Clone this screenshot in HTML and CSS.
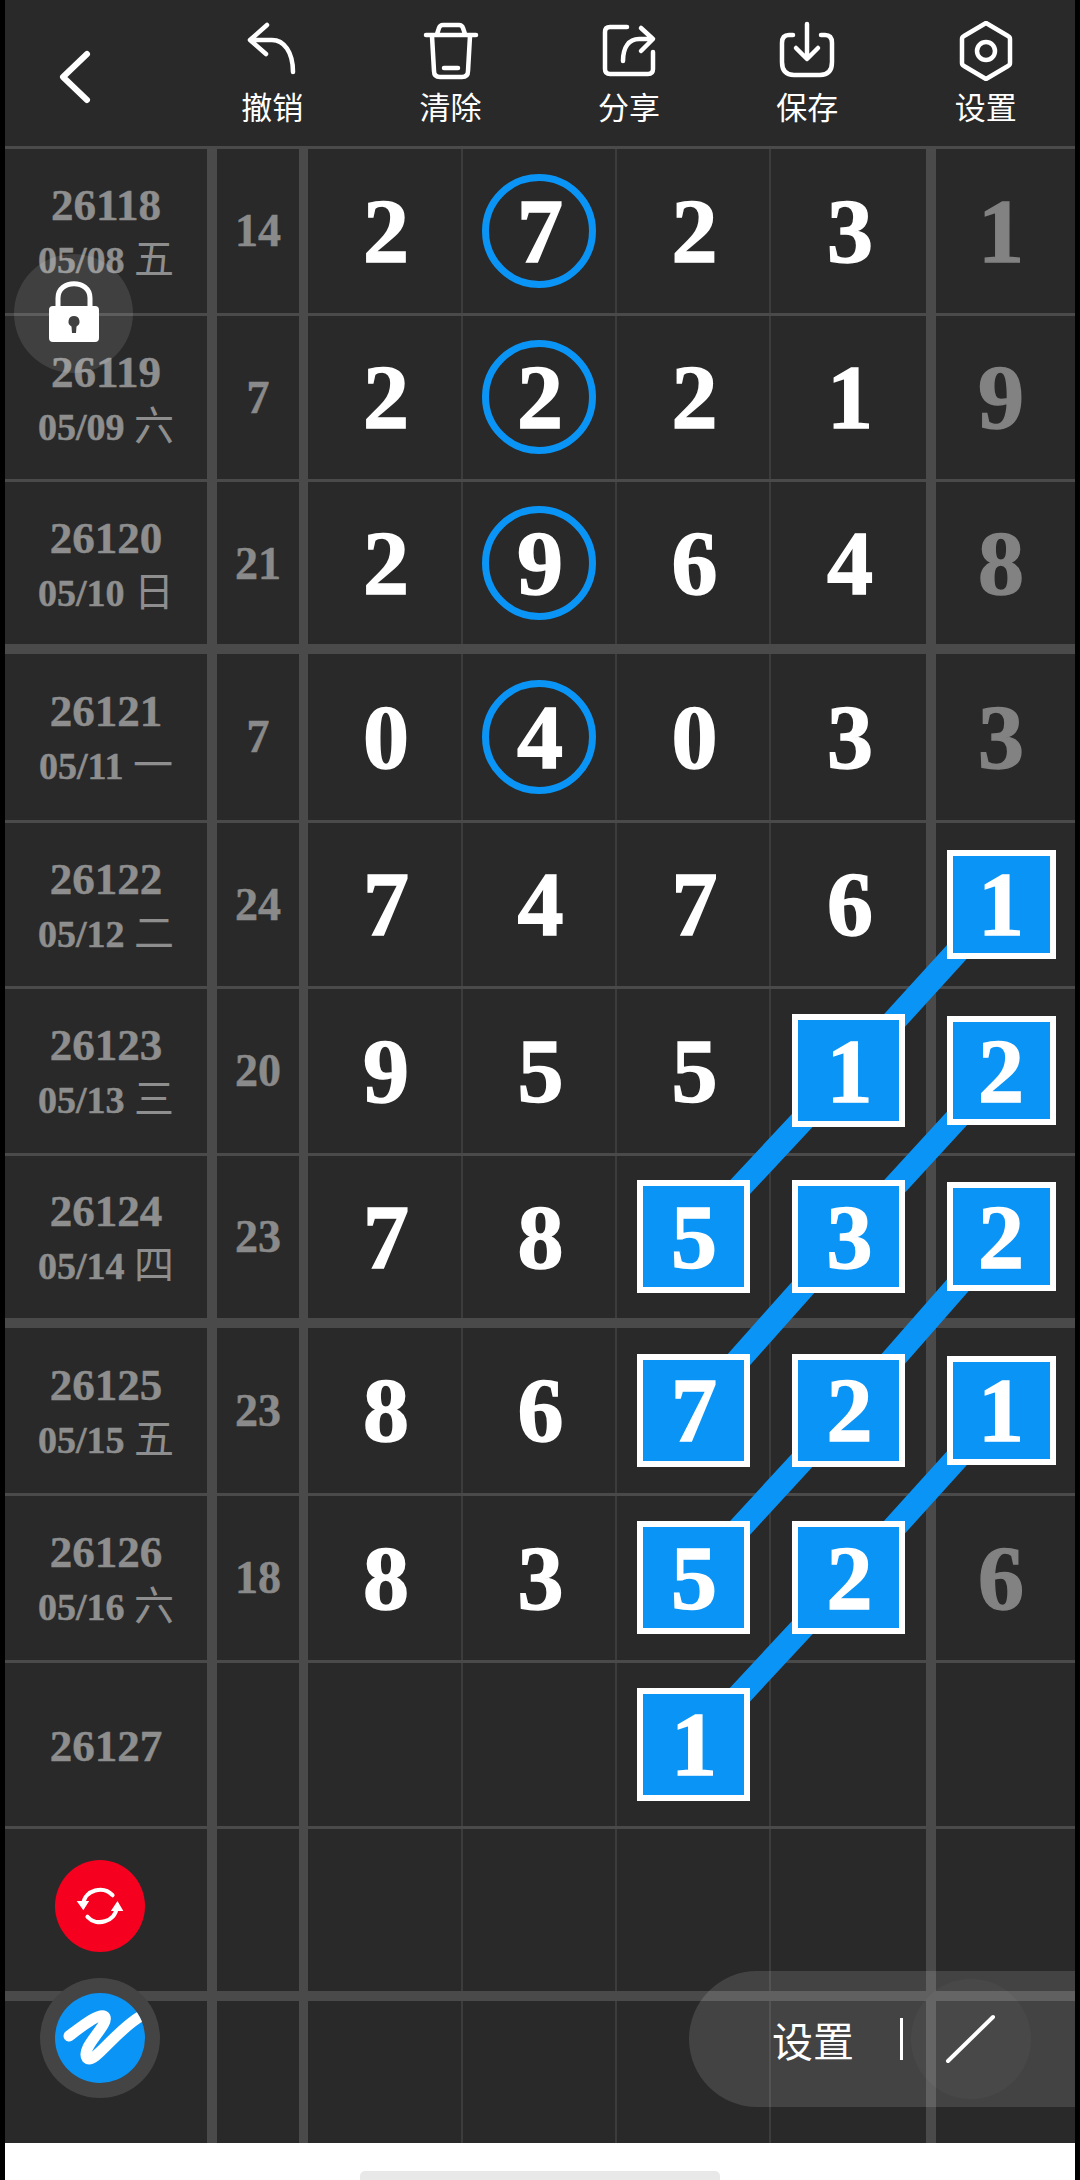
FILE: index.html
```html
<!DOCTYPE html>
<html lang="zh-CN">
<head>
    <meta charset="UTF-8">
    <meta name="viewport" content="width=device-width, initial-scale=1.0">
    <title>走势图</title>
    <link rel="stylesheet" href="styles.css">
</head>
<body>
    <div class="screen">
        <div class="toolbar">
            <div class="back">
                <svg width="40" height="60" viewBox="0 0 40 60"><path d="M30 7 L6 30 L30 53" /></svg>
            </div>
            <div class="tool">
                <svg viewBox="0 0 60 60"><path d="M25 4 L8 19 L24 33 M8 19 H30 C42 19 51 31 51 51" /></svg>
                <span>撤销</span>
            </div>
            <div class="tool">
                <svg viewBox="0 0 60 60"><path d="M5 14 H55 M16 13 L18 7 Q19 4 22 4 H38 Q41 4 42 7 L44 13" /><path d="M11 15 L13 50 Q13 56 19 56 H41 Q47 56 47 50 L49 15 M23 47 H37" /></svg>
                <span>清除</span>
            </div>
            <div class="tool">
                <svg viewBox="0 0 60 60"><path d="M28 6 H11 Q6 6 6 11 V48 Q6 53 11 53 H49 Q54 53 54 48 V31" /><path d="M42 7 L54 18 L42 30 M24 40 C24 26 30 18 40 18 H53" /></svg>
                <span>分享</span>
            </div>
            <div class="tool">
                <svg viewBox="0 0 60 60"><path d="M30 3 V37 M19 27 L30 38 L41 27" /><path d="M16 14 H12 Q5 14 5 22 V41 Q5 54 17 54 H43 Q55 54 55 41 V22 Q55 14 48 14 H44" /></svg>
                <span>保存</span>
            </div>
            <div class="tool">
                <svg viewBox="0 0 60 60"><path d="M30 2 L52 15 Q54 16 54 18 V42 Q54 44 52 45 L30 58 L8 45 Q6 44 6 42 V18 Q6 16 8 15 Z" /><circle cx="30" cy="30" r="9" /></svg>
                <span>设置</span>
            </div>
        </div>

        <div class="grid">
            <svg class="links" width="1070" height="1997">
                <polyline points="995.5,755 843.5,922 689,1087.5" />
                <polyline points="995.5,922 843.5,1087.5 689,1261" />
                <polyline points="995.5,1087.5 843.5,1261 689,1429" />
                <polyline points="995.5,1261 843.5,1429 689,1595" />
            </svg>

            <div class="row">
                <div class="cell date"><b>26118</b><span>05/08 <em>五</em></span></div><div class="cell sum">14</div>
                <div class="cell num">2</div><div class="cell num"><i class="ring">7</i></div><div class="cell num">2</div><div class="cell num">3</div><div class="cell last">1</div>
            </div>
            <div class="row">
                <div class="cell date"><b>26119</b><span>05/09 <em>六</em></span></div><div class="cell sum">7</div>
                <div class="cell num">2</div><div class="cell num"><i class="ring">2</i></div><div class="cell num">2</div><div class="cell num">1</div><div class="cell last">9</div>
            </div>
            <div class="row group-end">
                <div class="cell date"><b>26120</b><span>05/10 <em>日</em></span></div><div class="cell sum">21</div>
                <div class="cell num">2</div><div class="cell num"><i class="ring">9</i></div><div class="cell num">6</div><div class="cell num">4</div><div class="cell last">8</div>
            </div>
            <div class="row group-start">
                <div class="cell date"><b>26121</b><span>05/11 <em>一</em></span></div><div class="cell sum">7</div>
                <div class="cell num">0</div><div class="cell num"><i class="ring">4</i></div><div class="cell num">0</div><div class="cell num">3</div><div class="cell last">3</div>
            </div>
            <div class="row">
                <div class="cell date"><b>26122</b><span>05/12 <em>二</em></span></div><div class="cell sum">24</div>
                <div class="cell num">7</div><div class="cell num">4</div><div class="cell num">7</div><div class="cell num">6</div><div class="cell last"><i class="box narrow">1</i></div>
            </div>
            <div class="row">
                <div class="cell date"><b>26123</b><span>05/13 <em>三</em></span></div><div class="cell sum">20</div>
                <div class="cell num">9</div><div class="cell num">5</div><div class="cell num">5</div><div class="cell num"><i class="box">1</i></div><div class="cell last"><i class="box narrow">2</i></div>
            </div>
            <div class="row group-end">
                <div class="cell date"><b>26124</b><span>05/14 <em>四</em></span></div><div class="cell sum">23</div>
                <div class="cell num">7</div><div class="cell num">8</div><div class="cell num"><i class="box">5</i></div><div class="cell num"><i class="box">3</i></div><div class="cell last"><i class="box narrow">2</i></div>
            </div>
            <div class="row group-start">
                <div class="cell date"><b>26125</b><span>05/15 <em>五</em></span></div><div class="cell sum">23</div>
                <div class="cell num">8</div><div class="cell num">6</div><div class="cell num"><i class="box">7</i></div><div class="cell num"><i class="box">2</i></div><div class="cell last"><i class="box narrow">1</i></div>
            </div>
            <div class="row">
                <div class="cell date"><b>26126</b><span>05/16 <em>六</em></span></div><div class="cell sum">18</div>
                <div class="cell num">8</div><div class="cell num">3</div><div class="cell num"><i class="box">5</i></div><div class="cell num"><i class="box">2</i></div><div class="cell last">6</div>
            </div>
            <div class="row">
                <div class="cell date"><b>26127</b></div><div class="cell sum"></div>
                <div class="cell num"></div><div class="cell num"></div><div class="cell num"><i class="box">1</i></div><div class="cell num"></div><div class="cell last"></div>
            </div>
            <div class="row group-end">
                <div class="cell date"></div><div class="cell sum"></div>
                <div class="cell num"></div><div class="cell num"></div><div class="cell num"></div><div class="cell num"></div><div class="cell last"></div>
            </div>
            <div class="row">
                <div class="cell date"></div><div class="cell sum"></div>
                <div class="cell num"></div><div class="cell num"></div><div class="cell num"></div><div class="cell num"></div><div class="cell last"></div>
            </div>

            <div class="fab lock">
                <svg width="54" height="64" viewBox="0 0 54 64"><path class="shackle" d="M11 30 V18 C11 -1 43 -1 43 18 V30" /><path class="body" fill-rule="evenodd" d="M6 26 H48 Q52 26 52 30 V58 Q52 62 48 62 H6 Q2 62 2 58 V30 Q2 26 6 26 Z M27 36 A5.5 5.5 0 0 0 24.5 46.4 L25 53 H29 L29.5 46.4 A5.5 5.5 0 0 0 27 36 Z" /></svg>
            </div>
            <div class="fab refresh">
                <svg width="50" height="50" viewBox="0 0 60 60"><path d="M10 27 C12 11 34 5 45 17 M50 32 C48 49 26 55 15 43" /><path class="head" d="M2 24 L17 24 L10 35 Z M43 36 L58 36 L51 24 Z" /></svg>
            </div>
            <div class="fab pen">
                <svg width="90" height="90" viewBox="0 0 90 90"><path d="M14 43 C26 34 46 18 50 24 C54 32 25 55 32 65 C39 72 60 38 86 23" /></svg>
            </div>
            <div class="pill">
                <span class="pill-label">设置</span>
                <span class="pill-bar"></span>
                <span class="pill-knob">
                    <svg width="60" height="60" viewBox="0 0 60 60"><path d="M7 52 L52 8" /></svg>
                </span>
            </div>
        </div>

        <div class="home"><span class="home-bar"></span></div>
    </div>
</body>
</html>
```

FILE: styles.css
```css
html, body {
    margin: 0;
    padding: 0;
    background: #000;
}
.screen {
    width: 1080px;
    height: 2180px;
    overflow: hidden;
    display: flex;
    flex-direction: column;
    padding: 0 5px;
    box-sizing: border-box;
    background: #000;
    font-family: "Liberation Serif", "Noto Sans CJK SC", serif;
}

/* top toolbar */
.toolbar {
    height: 146px;
    flex: none;
    display: grid;
    grid-template-columns: 178px repeat(5, 178.4px);
    background: #292929;
    color: #fff;
    font-family: "Noto Sans CJK SC", sans-serif;
}
.toolbar svg path, .toolbar svg circle {
    fill: none;
    stroke: #fff;
    stroke-width: 4.5;
    stroke-linecap: round;
    stroke-linejoin: round;
}
.back {
    padding: 47px 0 0 52px;
}
.back svg path {
    stroke-width: 6;
}
.tool {
    display: flex;
    flex-direction: column;
    align-items: center;
    padding-top: 21px;
}
.tool svg {
    width: 60px;
    height: 60px;
    display: block;
}
.tool span {
    font-size: 31px;
    line-height: 44px;
    margin-top: 3px;
}

/* table */
.grid {
    position: relative;
    flex: 1;
    overflow: hidden;
    border-top: 3px solid #4a4a4a;
    background: #292929;
}
.row {
    display: grid;
    grid-template-columns: 212px 91px 155px 154px 154px 165px 139px;
    height: 166.5px;
    box-sizing: border-box;
    border-bottom: 3px solid #4a4a4a;
}
.row.group-end {
    height: 172px;
    border-bottom-width: 10px;
}
.row.group-start {
    height: 168.5px;
}
.cell {
    display: flex;
    flex-direction: column;
    align-items: center;
    justify-content: center;
    box-sizing: border-box;
    font-weight: 700;
    border-right: 2px solid #3c3c3c;
}
.date {
    border-right: 10px solid #4a4a4a;
    padding-top: 3px;
    color: #8e8e8e;
    font-size: 45px;
    -webkit-text-stroke: 0.5px #8e8e8e;
}
.date b {
    line-height: 52px;
}
.date span {
    font-size: 38px;
    line-height: 50px;
}
.date em {
    font-style: normal;
    font-weight: 400;
    font-size: 40px;
    -webkit-text-stroke: 0;
    font-family: "Noto Sans CJK SC", sans-serif;
}
.sum {
    border-right: 9px solid #4a4a4a;
    color: #8a8a8a;
    font-size: 46px;
    -webkit-text-stroke: 0.5px #8a8a8a;
}
.num {
    padding-left: 3px;
    color: #fff;
    font-size: 92px;
    -webkit-text-stroke: 1.5px #fff;
}
.num:nth-child(6) {
    border-right: 10px solid #4a4a4a;
}
.last {
    border-right: 0;
    padding-right: 9px;
    color: #828282;
    font-size: 92px;
    -webkit-text-stroke: 1.5px #828282;
}
.ring, .box {
    display: flex;
    align-items: center;
    justify-content: center;
    box-sizing: border-box;
    font-style: normal;
    color: #fff;
}
.ring {
    width: 114px;
    height: 114px;
    margin-left: -3px;
    padding-left: 2px;
    border: 7px solid #0a94f5;
    border-radius: 50%;
}
.box {
    position: relative;
    z-index: 1;
    width: 113px;
    height: 113px;
    margin-left: -3px;
    padding-left: 2px;
    border: 6px solid #fff;
    background: #0a94f5;
    -webkit-text-stroke: 1.5px #fff;
}
.box.narrow {
    width: 109px;
    height: 109px;
    margin-left: 0;
    padding-left: 0;
}
.links {
    position: absolute;
    left: 0;
    top: 0;
}
.links polyline {
    fill: none;
    stroke: #0a94f5;
    stroke-width: 24;
}

/* floating controls */
.fab {
    position: absolute;
    z-index: 2;
    border-radius: 50%;
    display: flex;
    align-items: center;
    justify-content: center;
}
.lock {
    left: 9px;
    top: 105px;
    width: 119px;
    height: 119px;
    background: rgba(255, 255, 255, 0.11);
}
.lock svg {
    margin-bottom: 4px;
}
.lock .shackle {
    fill: none;
    stroke: #fff;
    stroke-width: 5;
}
.lock .body {
    fill: #fff;
}
.refresh {
    left: 50px;
    top: 1711px;
    width: 90px;
    height: 92px;
    background: #f5001f;
}
.refresh path {
    fill: none;
    stroke: #fff;
    stroke-width: 5;
    stroke-linecap: round;
}
.refresh .head {
    fill: #fff;
    stroke: none;
}
.pen {
    left: 50px;
    top: 1844px;
    width: 90px;
    height: 90px;
    background: #0a94f5;
    box-shadow: 0 0 0 15px #444;
    overflow: hidden;
}
.pen path {
    fill: none;
    stroke: #fff;
    stroke-width: 11;
    stroke-linecap: round;
    stroke-linejoin: round;
}
.pill {
    position: absolute;
    z-index: 2;
    left: 684px;
    top: 1822px;
    right: 0;
    height: 136px;
    border-radius: 68px 0 0 68px;
    background: rgba(255, 255, 255, 0.12);
    display: flex;
    align-items: center;
    color: #fff;
    font-family: "Noto Sans CJK SC", sans-serif;
}
.pill-label {
    margin-left: 83px;
    font-size: 41px;
}
.pill-bar {
    width: 3px;
    height: 42px;
    margin-left: 46px;
    background: #fff;
}
.pill-knob {
    width: 120px;
    height: 120px;
    margin-left: 8px;
    border-radius: 50%;
    background: rgba(255, 255, 255, 0.03);
    display: flex;
    align-items: center;
    justify-content: center;
}
.pill-knob path {
    stroke: #fff;
    stroke-width: 4;
    stroke-linecap: round;
}

/* bottom gesture area */
.home {
    height: 37px;
    flex: none;
    display: flex;
    justify-content: center;
    align-items: flex-end;
    background: #fff;
}
.home-bar {
    width: 360px;
    height: 9px;
    border-radius: 5px 5px 0 0;
    background: #e8e8e8;
}
```
